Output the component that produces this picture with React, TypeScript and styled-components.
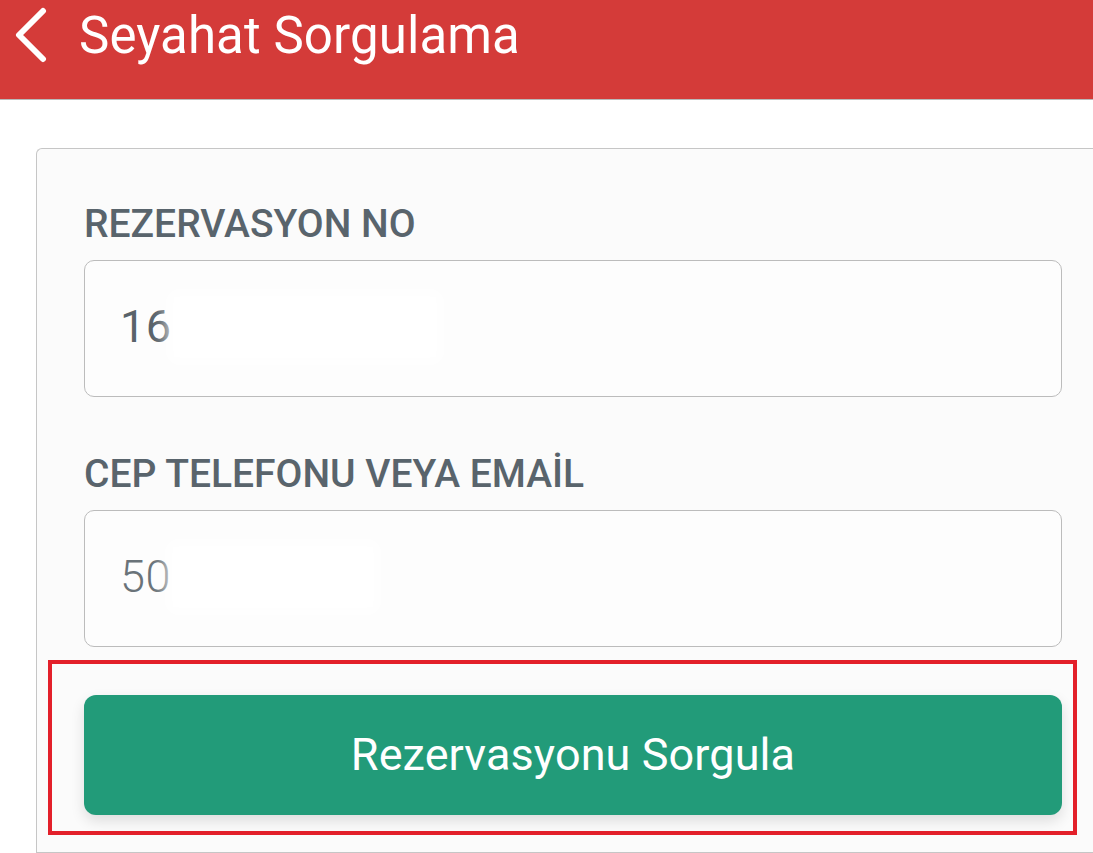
import React from "react";
import styled, { createGlobalStyle } from "styled-components";

const Global = createGlobalStyle`
  html, body { margin: 0; padding: 0; background: #ffffff; }
  body { font-family: Roboto, "Noto Sans", "Liberation Sans", sans-serif; overflow: hidden; }
  * { box-sizing: border-box; }
`;

const Page = styled.div`
  width: 1093px;
  height: 853px;
  display: flex;
  flex-direction: column;
  background: #ffffff;
`;

const TopBar = styled.header`
  height: 100px;
  flex: none;
  background: #d43b39;
  border-bottom: 1px solid #b9b9b9;
  display: flex;
  align-items: flex-start;
  padding: 7px 0 0 14px;
  gap: 31px;
`;

const BackButton = styled.button`
  width: 34px;
  height: 56px;
  padding: 0;
  border: none;
  background: none;
  display: flex;
  align-items: center;
  justify-content: center;
`;

const Title = styled.h1`
  margin: 0;
  font-family: Roboto, sans-serif;
  font-weight: 400;
  font-size: 51px;
  line-height: 58px;
  color: #ffffff;
  letter-spacing: 0.1px;
`;

const Body = styled.main`
  flex: 1;
  padding: 48px 0 0 36px;
  display: flex;
`;

const Card = styled.section`
  flex: 1;
  border: 1px solid #c6c6c6;
  border-right: none;
  border-radius: 6px 0 0 0;
  background: #fbfbfb;
  padding: 48px 32px 0 47px;
  display: flex;
  flex-direction: column;
`;

const Field = styled.div<{ $gap: number }>`
  width: 978px;
  display: flex;
  flex-direction: column;
  margin-bottom: ${(p) => p.$gap}px;
`;

const Label = styled.label`
  font-family: Roboto, sans-serif;
  font-weight: 500;
  font-size: 39px;
  line-height: 54px;
  color: #59646c;
  height: 63px;
  display: block;
`;

const InputBox = styled.div`
  height: 137px;
  border: 1.5px solid #bcbcbc;
  border-radius: 10px;
  background: #fdfdfd;
  display: flex;
  align-items: center;
  padding: 0 0 4px 35px;
`;

const Value = styled.span<{ $light?: boolean }>`
  font-family: Roboto, sans-serif;
  font-weight: ${(p) => (p.$light ? 300 : 400)};
  font-size: 45px;
  color: ${(p) => (p.$light ? "#6a7379" : "#59636a")};
  letter-spacing: 0.5px;
`;

const Masked = styled.span<{ $w: number }>`
  display: inline-block;
  width: ${(p) => p.$w}px;
  height: 60px;
  margin-left: 2px;
  background: #ffffff;
  box-shadow: 0 0 14px 6px rgba(255, 255, 255, 0.9);
`;

const Highlight = styled.div`
  margin: 13px 0 0 -36px;
  width: 1029px;
  height: 175px;
  border: 4px solid #e3202a;
  padding: 31px 0 0 32px;
`;

const SubmitButton = styled.button`
  width: 978px;
  height: 120px;
  border: none;
  border-radius: 12px;
  background: #229b79;
  color: #ffffff;
  font-family: Roboto, sans-serif;
  font-weight: 400;
  font-size: 45px;
  letter-spacing: 0.1px;
  box-shadow: 0 6px 14px rgba(0, 0, 0, 0.12);
  padding-bottom: 2px;
`;

export default function App() {
  return (
    <Page>
      <Global />
      <TopBar>
        <BackButton aria-label="Geri">
          <svg width="34" height="56" viewBox="0 0 34 56" fill="none">
            <path d="M29 4 L5 28 L29 52" stroke="#ffffff" strokeWidth="6" strokeLinecap="round" strokeLinejoin="round" />
          </svg>
        </BackButton>
        <Title>Seyahat Sorgulama</Title>
      </TopBar>
      <Body>
        <Card>
          <Field $gap={50}>
            <Label>REZERVASYON NO</Label>
            <InputBox>
              <Value>16</Value>
              <Masked $w={262} />
            </InputBox>
          </Field>
          <Field $gap={0}>
            <Label>CEP TELEFONU VEYA EMAİL</Label>
            <InputBox>
              <Value $light>50</Value>
              <Masked $w={200} />
            </InputBox>
          </Field>
          <Highlight>
            <SubmitButton>Rezervasyonu Sorgula</SubmitButton>
          </Highlight>
        </Card>
      </Body>
    </Page>
  );
}
